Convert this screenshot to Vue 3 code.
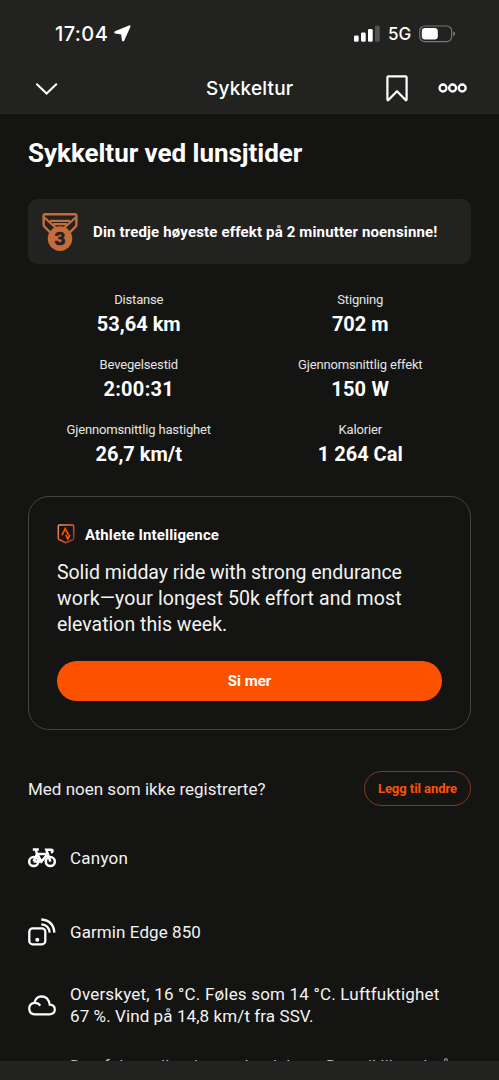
<script setup>
const stats = [
  { label: 'Distanse', value: '53,64 km', k: 'a' },
  { label: 'Stigning', value: '702 m', k: 'b' },
  { label: 'Bevegelsestid', value: '2:00:31', k: 'c' },
  { label: 'Gjennomsnittlig effekt', value: '150 W', k: 'd' },
  { label: 'Gjennomsnittlig hastighet', value: '26,7 km/t', k: 'e' },
  { label: 'Kalorier', value: '1 264 Cal', k: 'f' }
]
</script>

<template>
  <div class="screen">
    <header>
      <div class="status">
        <span class="time">17:04</span>
        <svg class="loc" width="17" height="17" viewBox="0 0 17 17"><path d="M15.3 1.1 1.2 6.9q-.8.6.2 1l6.3.9.9 6.4q.4 1 1.1.1L15.8 1.6q.2-.8-.5-.5Z" fill="#fff" stroke="#fff" stroke-width="1.3" stroke-linejoin="round"/></svg>
        <svg class="signal" width="27" height="18" viewBox="0 0 27 18" fill="#fff"><rect x="0" y="10.5" width="4.7" height="6.2" rx="1.3"/><rect x="7" y="7.5" width="4.7" height="9.2" rx="1.3"/><rect x="14" y="4" width="4.7" height="12.7" rx="1.3"/><rect x="21" y=".7" width="4.7" height="16" rx="1.3" fill="#525251"/></svg>
        <span class="net">5G</span>
        <svg class="battery" width="37" height="18" viewBox="0 0 37 18"><rect x=".7" y="1" width="32" height="15.6" rx="5" fill="none" stroke="#777775" stroke-width="1.2"/><rect x="2.8" y="3.1" width="16" height="11.4" rx="3.3" fill="#fff"/><path d="M34.2 6.3q2 .6 2 2.5t-2 2.5Z" fill="#777775"/></svg>
      </div>
      <div class="nav">
        <svg class="down" width="24" height="14" viewBox="0 0 24 14"><path d="m1.4 1.8 10.2 9.7L21.8 1.8" fill="none" stroke="#fff" stroke-width="2.1"/></svg>
        <span class="navtitle">Sykkeltur</span>
        <svg class="mark" width="22" height="27" viewBox="0 0 22 27"><path d="M1.4 2.3q0-1 1-1h17.2q1 0 1 1v22.4q-.3.9-1 .4L11 16.2 2.4 25.1q-.7.5-1-.4Z" fill="none" stroke="#fff" stroke-width="2.2" stroke-linejoin="round"/></svg>
        <svg class="dots" width="30" height="10" viewBox="0 0 30 10" fill="none" stroke="#fff" stroke-width="2.3"><circle cx="5" cy="5" r="3.5"/><circle cx="14.6" cy="5" r="3.5"/><circle cx="24.2" cy="5" r="3.5"/></svg>
      </div>
    </header>
    <main>
      <h1><span>Sykkeltur ved lunsjtider</span></h1>
      <div class="award">
        <svg width="36" height="38" viewBox="0 0 36 38" fill="none" stroke="#c66c3c">
          <path d="M1.6 3q0-1.7 1.7-1.7h29.4q1.7 0 1.7 1.7v8.4q0 1.4-.8 2.2l-6 6M1.6 3v8.4q0 1.4.8 2.2l6 6" stroke-width="2.4"/>
          <path d="M2 4.3 14 15M34 4.3 22 15M8 7.8h20M11 11.2h14" stroke-width="2.2"/>
          <circle cx="18" cy="25.6" r="12.3" fill="#c66c3c" stroke="none"/>
          <text x="18" y="31.9" text-anchor="middle" fill="#222221" stroke="#222221" stroke-width=".5" font-family="Inter, sans-serif" font-weight="800" font-size="17">3</text>
        </svg>
        <span>Din tredje høyeste effekt på 2 minutter noensinne!</span>
      </div>
      <div class="stats">
        <div v-for="s in stats" :key="s.k" class="stat">
          <div class="label"><span>{{ s.label }}</span></div>
          <div class="value"><span :class="'v-' + s.k">{{ s.value }}</span></div>
        </div>
      </div>
      <section class="card">
        <div class="ai">
          <svg width="18" height="20" viewBox="0 0 18 20" fill="none">
            <defs><linearGradient id="shield" x1="0" y1="0" x2="1" y2="1"><stop offset="0" stop-color="#e79573"/><stop offset=".4" stop-color="#ef6530"/><stop offset="1" stop-color="#7c2f10"/></linearGradient></defs>
            <path d="M1.3 2q0-1 1-1h13.4q1 0 1 1v12.2q0 .9-.7 1.3l-7 3.3-7-3.3q-.7-.4-.7-1.3Z" stroke="url(#shield)" stroke-width="1.5"/>
            <path d="m5 11.1 3.2-6.4 3.5 6.4M8.8 10.8l2 4 2.2-4" stroke="#fc5200" stroke-width="1.7"/>
          </svg>
          <b>Athlete Intelligence</b>
        </div>
        <p><span class="p1">Solid midday ride with strong endurance</span><br><span class="p2">work—your longest 50k effort and most</span><br><span class="p3">elevation this week.</span></p>
        <button class="more"><span>Si mer</span></button>
      </section>
      <div class="others"><span class="question">Med noen som ikke registrerte?</span><button><span>Legg til andre</span></button></div>
      <div class="row bike">
        <svg width="28" height="20" viewBox="0 0 28 20" fill="none" stroke="#fff" stroke-width="2.5"><circle cx="5.7" cy="13.6" r="4.5"/><circle cx="22.3" cy="13.6" r="4.5"/><path d="M5.6 13.6 9 5.9h11M9.2 6l4.2 7.6L19.8 6M5.6 13.6h7.8M9 5.9 7.8 2M4.8 1.6h6M22.4 13.6 18.3 1.7h5q1.3 0 1.3 1.3 0 1.2-1.8 1.6"/></svg>
        <span class="canyon">Canyon</span>
      </div>
      <div class="row device">
        <svg width="28" height="28" viewBox="0 0 28 28" fill="none" stroke="#fff" stroke-width="2.3"><rect x="1.3" y="10.3" width="16" height="16" rx="3.4"/><circle cx="9.3" cy="21.7" r="2" fill="#fff" stroke="none"/><path d="M13.3 6.3q7.7.5 8.4 8.4M13.3 1.5Q25.4 2.3 26.4 14.7"/></svg>
        <span class="garmin">Garmin Edge 850</span>
      </div>
      <div class="row weather">
        <svg width="28" height="21" viewBox="0 0 28 21" fill="none" stroke="#fff" stroke-width="2.2"><path d="M6.8 19.3h15q5-.4 5-4.8 0-4.5-5.1-4.8Q20.5 1.3 13.2 1.3 8 1.5 6.3 7.8 1.2 8.6 1.2 13.6q.3 5.5 5.6 5.7ZM6.3 7.8q3.8-.2 6 2.8"/></svg>
        <div><span class="w1">Overskyet, 16 °C. Føles som 14 °C. Luftfuktighet</span><br><span class="w2">67 %. Vind på 14,8 km/t fra SSV.</span></div>
      </div>
      <div class="teaser">Den følger eller den andre dels en Den vil likevel gå</div>
    </main>
    <footer></footer>
  </div>
</template>

<style>
body { margin: 0; background: #141413; }
</style>
<style scoped>
* { box-sizing: border-box; }
.screen { width: 499px; height: 1080px; overflow: hidden; background: #141413; color: #fff; font-family: Roboto, "Noto Sans", sans-serif; display: flex; flex-direction: column; }
span, b { white-space: nowrap; }
svg { flex: none; display: block; }
button { font-family: inherit; display: flex; align-items: center; justify-content: center; padding: 0; }
header { height: 114px; flex: none; background: #222221; border-bottom: 1px solid #262625; font-family: Inter, sans-serif; }
.status { height: 62px; padding: 20px 43px 0 55px; display: flex; align-items: flex-start; }
.time { font-size: 20px; line-height: 28px; font-weight: 500; letter-spacing: .4px; width: 59px; }
.loc { margin-top: 5px; }
.signal { margin: 5px 7px 0 auto; }
.net { font-size: 17px; font-weight: 500; line-height: 29px; width: 24px; margin-right: 7px; }
.battery { margin-top: 5px; }
.nav { height: 52px; padding: 0 31px 0 35px; display: flex; align-items: center; }
.down { margin-top: 1px; }
.navtitle { font-size: 19px; font-weight: 500; letter-spacing: .2px; width: 90px; margin: 0 auto 0 147px; }
.mark { margin-right: 30px; }
main { height: 947px; flex: none; overflow: hidden; padding: 21px 28px 0; }
h1 { font-size: 26px; line-height: 36px; font-weight: 700; letter-spacing: -.03px; margin: 0 0 28px; }
.award { height: 65px; border-radius: 9px; background: #222221; display: flex; align-items: center; padding-left: 14px; gap: 15px; font-size: 15px; font-weight: 700; letter-spacing: .15px; }
.stats { display: grid; grid-template-columns: 1fr 1fr; grid-auto-rows: 65px; margin-top: 26px; text-align: center; }
.label { font-size: 13px; line-height: 20px; letter-spacing: -.16px; color: #e4e4e2; }
.value { font-size: 20px; line-height: 28px; font-weight: 700; }
.v-c { letter-spacing: .3px; }
.v-d { letter-spacing: .25px; }
.card { height: 234px; margin-top: 11px; border: 1px solid #444442; border-radius: 21px; padding: 27px 28px; }
.ai { height: 20px; display: flex; align-items: center; gap: 10px; font-size: 15px; letter-spacing: .14px; }
.ai b { padding-top: 1px; }
p { margin: 16px 0 23px; font-size: 19.5px; line-height: 26px; color: #f3f3f1; }
.p1 { letter-spacing: -.05px; }
.p2 { letter-spacing: .1px; }
.more { width: 100%; height: 40px; border: 0; border-radius: 20px; background: #fc5200; color: #fff; font-size: 15px; font-weight: 700; }
.others { height: 35px; margin-top: 41px; display: flex; align-items: center; justify-content: space-between; color: #ededeb; font-size: 17px; }
.others button { width: 107px; height: 35px; border: 1px solid #8b3716; border-radius: 18px; color: #fc5200; background: none; font-size: 13px; font-weight: 700; letter-spacing: -.05px; }
.row { display: flex; align-items: center; gap: 14px; font-size: 17px; line-height: 22.5px; color: #f3f3f1; }
.bike { height: 28px; margin-top: 38px; }
.device { height: 30px; margin-top: 45px; }
.weather { height: 46px; margin-top: 35px; }
.canyon { letter-spacing: .25px; }
.garmin { letter-spacing: .08px; }
.w1 { letter-spacing: .19px; }
.w2 { letter-spacing: .09px; }
.teaser { margin: 26px 0 0 42px; font-size: 17px; line-height: 24px; white-space: nowrap; color: #bbb; }
footer { flex: 1; background: #222221; }
</style>
